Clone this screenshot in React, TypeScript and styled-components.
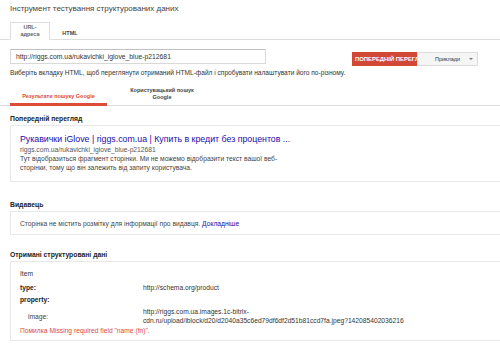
import React from "react";
import styled, { createGlobalStyle } from "styled-components";

const Global = createGlobalStyle`
  html, body { margin: 0; padding: 0; background: #fff; overflow: hidden; }
  body { font-family: "Liberation Sans", Arial, sans-serif; color: #333; width: 500px; height: 347px; }
`;

const Page = styled.div`
  width: 560px;
  display: flex;
  flex-direction: column;
`;

const Title = styled.h1`
  margin: 3px 0 0 10px;
  font-size: 8px;
  font-weight: normal;
  color: #444;
  line-height: 11px;
`;

const TabBar = styled.div`
  display: flex;
  align-items: flex-end;
  margin-top: 8px;
  padding-left: 10px;
  border-bottom: 1px solid #ddd;
  height: 17px;
`;

const Tab = styled.div<{ $active?: boolean }>`
  width: 40px;
  height: ${(p) => (p.$active ? "18px" : "17px")};
  margin-bottom: ${(p) => (p.$active ? "-1px" : "0")};
  box-sizing: border-box;
  border: 1px solid ${(p) => (p.$active ? "#ddd" : "transparent")};
  border-bottom: ${(p) => (p.$active ? "1px solid #fff" : "none")};
  background: #fff;
  display: flex;
  align-items: center;
  justify-content: center;
  text-align: center;
  font-size: 5.5px;
  font-weight: bold;
  color: ${(p) => (p.$active ? "#666" : "#444")};
  line-height: 7px;
  padding-top: ${(p) => (p.$active ? "0" : "4px")};
`;

const InputRow = styled.div`
  display: flex;
  align-items: flex-start;
  margin-top: 9px;
  padding-left: 10px;
`;

const UrlInput = styled.div`
  width: 256px;
  height: 15px;
  box-sizing: border-box;
  border: 1px solid #d9d9d9;
  border-top-color: #c0c0c0;
  font-size: 6.8px;
  color: #333;
  padding-left: 5px;
  display: flex;
  align-items: center;
`;

const Buttons = styled.div`
  display: flex;
  margin-left: 86px;
  margin-top: 3px;
`;

const RedButton = styled.div`
  width: 65px;
  height: 14px;
  background: #d14836;
  color: #fff;
  font-size: 5.9px;
  font-weight: bold;
  display: flex;
  align-items: center;
  padding-left: 3px;
  box-sizing: border-box;
  overflow: hidden;
  white-space: nowrap;
`;

const GreyButton = styled.div`
  width: 61px;
  height: 14px;
  box-sizing: border-box;
  background: #f5f5f5;
  border: 1px solid #dcdcdc;
  font-size: 5.5px;
  color: #333;
  display: flex;
  align-items: center;
  padding-left: 17px;
  position: relative;
`;

const Caret = styled.span`
  position: absolute;
  right: 4px;
  top: 5px;
  width: 0;
  height: 0;
  border-left: 2px solid transparent;
  border-right: 2px solid transparent;
  border-top: 2px solid #777;
`;

const Hint = styled.div`
  margin: 2px 0 0 10px;
  font-size: 6.6px;
  color: #333;
  line-height: 9px;
`;

const ResultTabs = styled.div`
  display: flex;
  margin-top: 9px;
  padding-left: 10px;
  border-bottom: 1px solid #ddd;
  height: 19px;
`;

const ResultTab = styled.div<{ $active?: boolean }>`
  width: ${(p) => (p.$active ? "97px" : "110px")};
  box-sizing: border-box;
  display: flex;
  align-items: ${(p) => (p.$active ? "flex-end" : "flex-start")};
  justify-content: center;
  text-align: center;
  font-size: 5.5px;
  font-weight: bold;
  line-height: 7px;
  color: ${(p) => (p.$active ? "#dd4b39" : "#444")};
  border-bottom: ${(p) => (p.$active ? "3px solid #dd4b39" : "none")};
  margin-bottom: ${(p) => (p.$active ? "-1px" : "0")};
  padding-bottom: ${(p) => (p.$active ? "3px" : "0")};
  padding-top: ${(p) => (p.$active ? "0" : "1px")};
`;

const SectionHead = styled.div<{ $top: number }>`
  margin: ${(p) => p.$top}px 0 0 10px;
  font-size: 6.8px;
  font-weight: bold;
  color: #222;
  line-height: 9px;
`;

const Card = styled.div<{ $pad: string }>`
  margin: 2px 0 0 10px;
  border: 1px solid #e8e8e8;
  border-right: none;
  padding: ${(p) => p.$pad};
  display: flex;
  flex-direction: column;
`;

const LinkTitle = styled.div`
  font-size: 8.8px;
  color: #1a0dab;
  line-height: 11px;
`;

const SmallText = styled.div<{ $color?: string; $top?: number }>`
  font-size: 6.7px;
  line-height: 9px;
  color: ${(p) => p.$color || "#444"};
  margin-top: ${(p) => p.$top ?? 0}px;
`;

const Link = styled.span`
  color: #1a0dab;
`;

const PropRow = styled.div<{ $top?: number }>`
  display: grid;
  grid-template-columns: 123px 1fr;
  font-size: 6.7px;
  line-height: 9px;
  color: #333;
  margin-top: ${(p) => p.$top ?? 0}px;
  align-items: center;
`;

const PropKey = styled.div<{ $bold?: boolean; $indent?: boolean }>`
  font-weight: ${(p) => (p.$bold ? "bold" : "normal")};
  padding-left: ${(p) => (p.$indent ? "8px" : "0")};
  color: ${(p) => (p.$bold ? "#222" : "#444")};
`;

const PropVal = styled.div`
  color: #333;
`;

export default function App() {
  return (
    <>
      <Global />
      <Page>
        <Title>Інструмент тестування структурованих даних</Title>
        <TabBar>
          <Tab $active>
            URL-
            <br />
            адреса
          </Tab>
          <Tab>HTML</Tab>
        </TabBar>
        <InputRow>
          <UrlInput>http://riggs.com.ua/rukavichki_iglove_blue-p212681</UrlInput>
          <Buttons>
            <RedButton>ПОПЕРЕДНІЙ ПЕРЕГЛЯД</RedButton>
            <GreyButton>
              Приклади
              <Caret />
            </GreyButton>
          </Buttons>
        </InputRow>
        <Hint>
          Виберіть вкладку HTML, щоб переглянути отриманий HTML-файл і спробувати налаштувати його по-різному.
        </Hint>
        <ResultTabs>
          <ResultTab $active>Результати пошуку Google</ResultTab>
          <ResultTab>
            Користувацький пошук
            <br />
            Google
          </ResultTab>
        </ResultTabs>

        <SectionHead $top={8}>Попередній перегляд</SectionHead>
        <Card $pad="8px 9px 9px">
          <LinkTitle>Рукавички iGlove | riggs.com.ua | Купить в кредит без процентов ...</LinkTitle>
          <SmallText $color="#555">riggs.com.ua/rukavichki_iglove_blue-p212681</SmallText>
          <SmallText>
            Тут відобразиться фрагмент сторінки. Ми не можемо відобразити текст вашої веб-
            <br />
            сторінки, тому що він залежить від запиту користувача.
          </SmallText>
        </Card>

        <SectionHead $top={18}>Видавець</SectionHead>
        <Card $pad="7px 9px 6px">
          <SmallText>
            Сторінка не містить розмітку для інформації про видавця. <Link>Докладніше</Link>
          </SmallText>
        </Card>

        <SectionHead $top={15}>Отримані структуровані дані</SectionHead>
        <Card $pad="7px 9px 5px">
          <SmallText $color="#333">Item</SmallText>
          <PropRow $top={5}>
            <PropKey $bold>type:</PropKey>
            <PropVal>http://schema.org/product</PropVal>
          </PropRow>
          <PropRow $top={3}>
            <PropKey $bold>property:</PropKey>
            <PropVal />
          </PropRow>
          <PropRow $top={3}>
            <PropKey $indent>image:</PropKey>
            <PropVal>
              http://riggs.com.ua.images.1c-bitrix-
              <br />
              cdn.ru/upload/iblock/d20/d2040a35c6ed79df6df2d51b81ccd7fa.jpeg?142085402036216
            </PropVal>
          </PropRow>
          <SmallText $color="#dd4b39" $top={1}>
            Помилка Missing required field "name (fn)".
          </SmallText>
        </Card>
      </Page>
    </>
  );
}
